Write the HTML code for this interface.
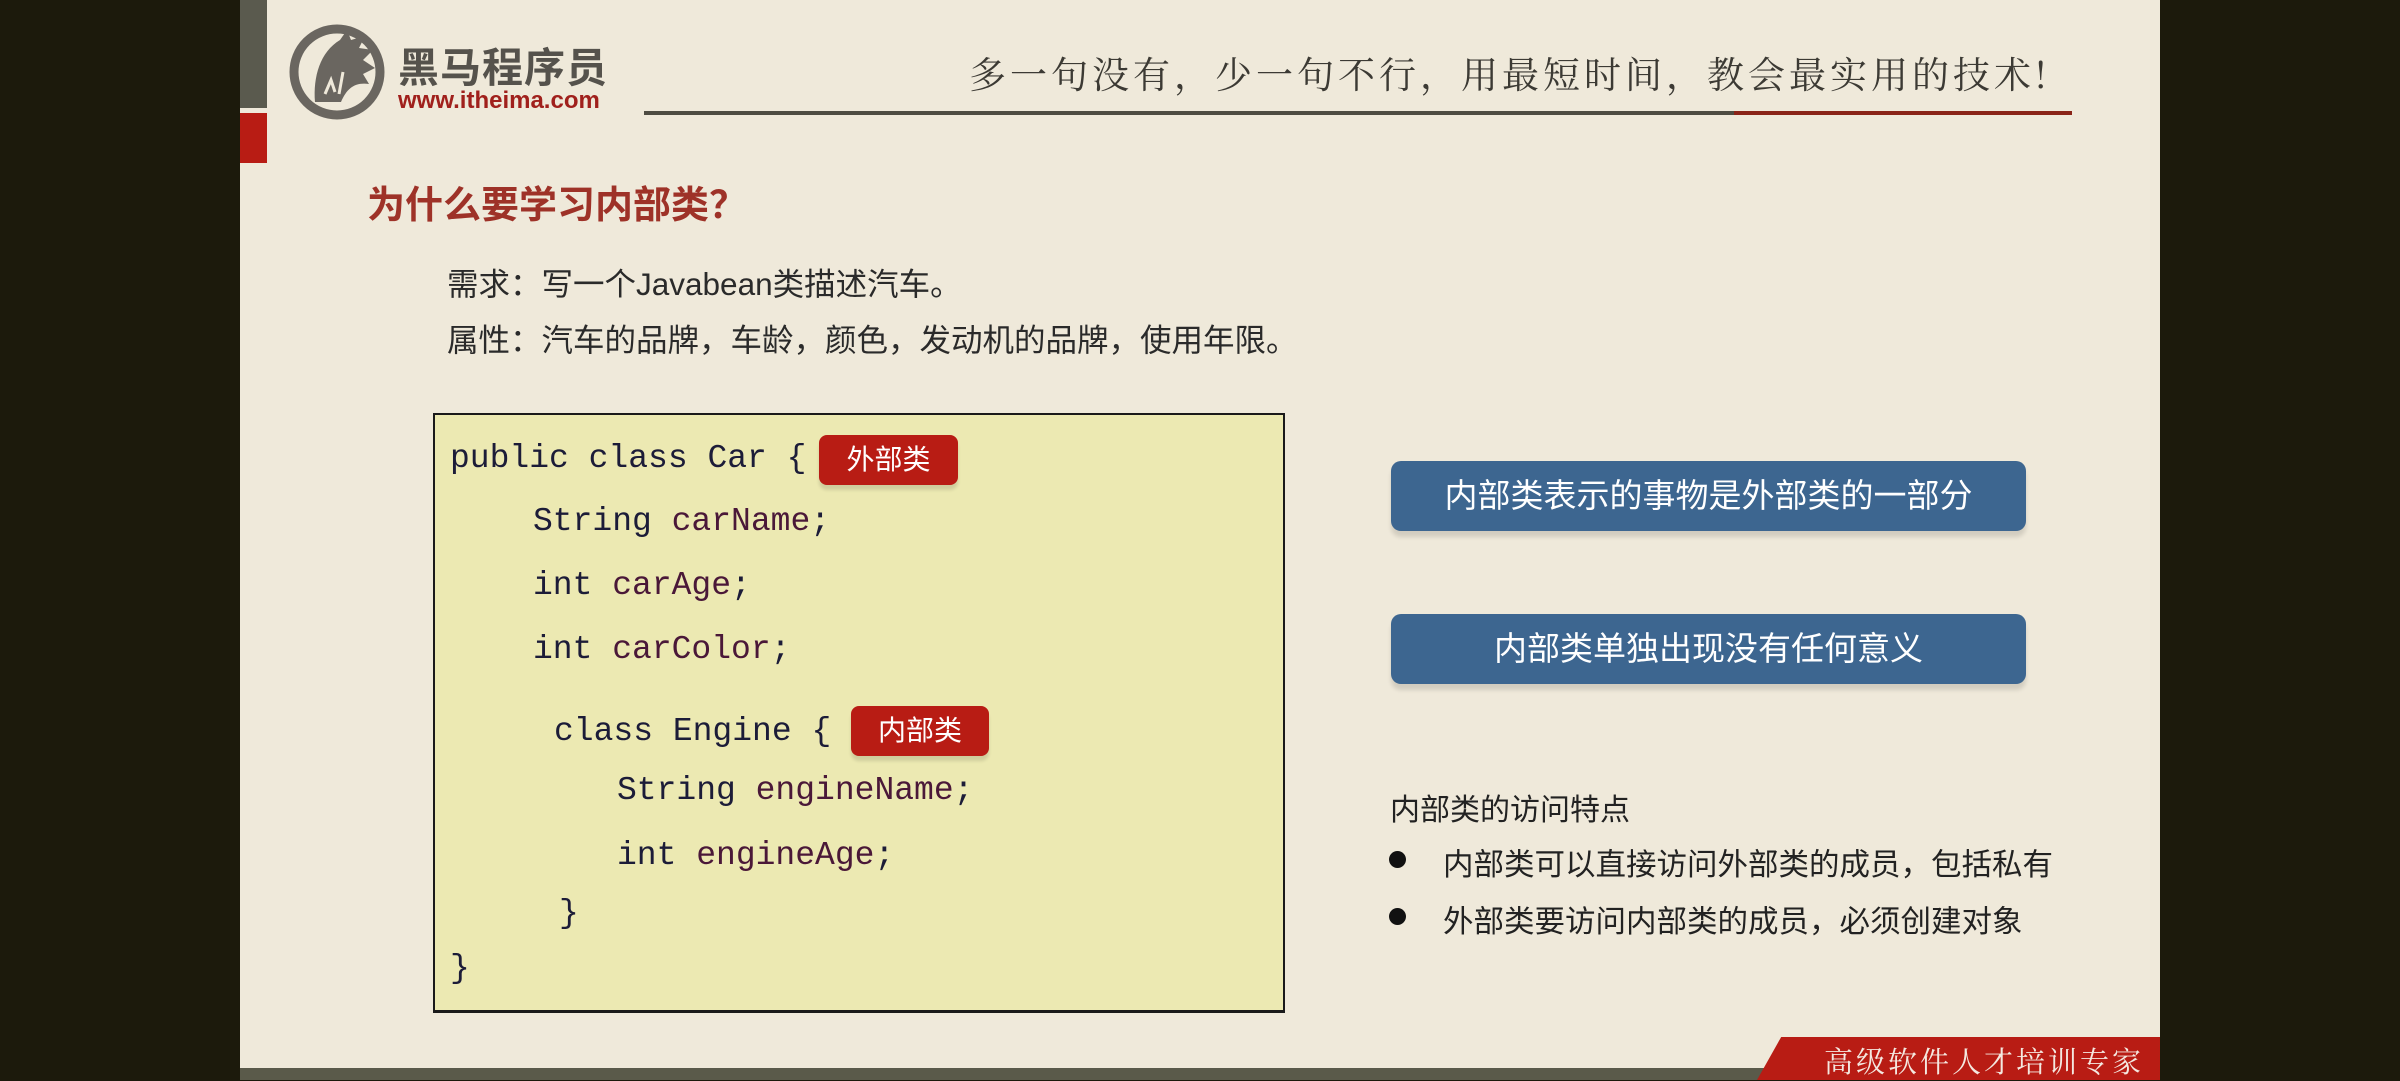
<!DOCTYPE html>
<html><head><meta charset="utf-8">
<style>
*{margin:0;padding:0;box-sizing:border-box}
body{width:2400px;height:1080px;background:#1c1a0c;position:relative;overflow:hidden;font-family:"Liberation Sans","Noto Sans CJK SC",sans-serif}
#slide{position:absolute;left:240px;top:0;width:1920px;height:1080px;background:#efe9da}
.a{position:absolute;white-space:nowrap}
.mono{font-family:"Liberation Mono","DejaVu Sans Mono",monospace;font-size:33px;color:#1c1c38}
.id{color:#4a1838}
.tag{position:absolute;background:#b81c14;color:#fff;border-radius:8px;font-size:28px;text-align:center;box-shadow:0 5px 3px rgba(0,0,0,.12)}
.btn{position:absolute;left:1391px;width:635px;height:70px;background:#3d6690;border-radius:10px;color:#fff;font-size:33px;text-align:center;line-height:70px;box-shadow:0 6px 4px rgba(0,0,0,.12)}
</style></head><body>
<div id="slide"></div>
<div class="a" style="left:240px;top:0;width:27px;height:108px;background:#5a5a4e"></div>
<div class="a" style="left:240px;top:113px;width:27px;height:50px;background:#b81c14"></div>
<svg class="a" style="left:285px;top:22px" width="105" height="100" viewBox="0 0 105 100">
<circle cx="52" cy="50" r="43" fill="none" stroke="#6a6660" stroke-width="9"/>
<path d="M30 80 C28 55 35 30 55 18 L62 8 L66 18 L80 14 L74 26 L88 28 L78 38 L90 46 L78 52 L84 62 C70 60 62 66 56 80 Z" fill="#6a6660"/>
<path d="M40 72 L46 58 L50 70 M58 50 L54 72" stroke="#efe9da" stroke-width="3" fill="none"/>
</svg>
<div class="a" style="left:398px;top:34px;font-size:41px;font-weight:bold;color:#55524c;letter-spacing:1px">黑马程序员</div>
<div class="a" style="left:398px;top:87px;font-size:24px;color:#a0201c;font-weight:bold">www.itheima.com</div>
<div class="a" style="left:969px;top:45px;font-size:37px;color:#3c3a34;letter-spacing:4px;font-family:'Noto Serif CJK SC',serif">多一句没有，少一句不行，用最短时间，教会最实用的技术!</div>
<div class="a" style="left:644px;top:111px;width:1090px;height:4px;background:#4e4c42"></div>
<div class="a" style="left:1734px;top:111px;width:338px;height:4px;background:#8a2418"></div>
<div class="a" style="left:367px;top:174px;font-size:38px;font-weight:bold;color:#9e3228">为什么要学习内部类？</div>
<div class="a" style="left:447px;top:259px;font-size:31.5px;color:#2a2a2a">需求：写一个Javabean类描述汽车。</div>
<div class="a" style="left:447px;top:315px;font-size:31.5px;color:#2a2a2a">属性：汽车的品牌，车龄，颜色，发动机的品牌，使用年限。</div>
<div class="a" style="left:433px;top:413px;width:852px;height:600px;background:#ece9b2;border:2px solid #1a1a1a;border-bottom-width:3px"></div>
<div class="a mono" style="left:450px;top:440px">public class Car {</div>
<div class="a mono" style="left:533px;top:503px">String <span class="id">carName</span>;</div>
<div class="a mono" style="left:533px;top:567px">int <span class="id">carAge</span>;</div>
<div class="a mono" style="left:533px;top:631px">int <span class="id">carColor</span>;</div>
<div class="a mono" style="left:554px;top:713px">class Engine {</div>
<div class="a mono" style="left:617px;top:772px">String <span class="id">engineName</span>;</div>
<div class="a mono" style="left:617px;top:837px">int <span class="id">engineAge</span>;</div>
<div class="a mono" style="left:559px;top:895px">}</div>
<div class="a mono" style="left:450px;top:950px">}</div>
<div class="tag" style="left:819px;top:435px;width:139px;height:50px;line-height:50px">外部类</div>
<div class="tag" style="left:851px;top:706px;width:138px;height:50px;line-height:50px">内部类</div>
<div class="btn" style="top:461px">内部类表示的事物是外部类的一部分</div>
<div class="btn" style="top:614px">内部类单独出现没有任何意义</div>
<div class="a" style="left:1390px;top:785px;font-size:30px;color:#222">内部类的访问特点</div>
<div class="a" style="left:1389px;top:851px;width:17px;height:17px;border-radius:50%;background:#111"></div>
<div class="a" style="left:1389px;top:908px;width:17px;height:17px;border-radius:50%;background:#111"></div>
<div class="a" style="left:1443px;top:840px;font-size:30.5px;color:#222">内部类可以直接访问外部类的成员，包括私有</div>
<div class="a" style="left:1443px;top:897px;font-size:30.5px;color:#222">外部类要访问内部类的成员，必须创建对象</div>
<div class="a" style="left:240px;top:1068px;width:1920px;height:12px;background:#5a5a4a"></div>
<div class="a" style="left:1757px;top:1037px;width:403px;height:43px;background:#b81c14;clip-path:polygon(6% 0,100% 0,100% 100%,0 100%)"></div>
<div class="a" style="left:1824px;top:1040px;font-size:29px;color:#f4e8e0;letter-spacing:3px;font-family:'Noto Serif CJK SC',serif">高级软件人才培训专家</div>
</body></html>
